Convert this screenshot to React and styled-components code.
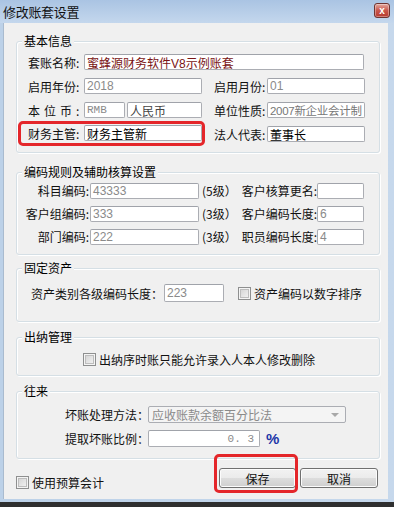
import styled, { createGlobalStyle } from "styled-components";

const GlobalStyle = createGlobalStyle`
  html, body {
    margin: 0;
    padding: 0;
    background: #303030;
  }
  body {
    font-family: "Noto Sans CJK SC", "Liberation Sans", sans-serif;
    font-size: 12px;
    color: #000;
  }
`;

function App() {
  return (
    <>
      <GlobalStyle />
      <Window>
        <TitleBar>
          <Title>修改账套设置</Title>
          <CloseButton>x</CloseButton>
        </TitleBar>
        <Client>
          <Group $mt={18} $h={112} $pt={8} $pl={1}>
            <Legend>基本信息</Legend>
            <Row $h={24}>
              <Cell $w={351}>
                <Label $w={56}>套账名称:</Label>
                <Field $grow $color="#7a1414" $cjk>蜜蜂源财务软件V8示例账套</Field>
              </Cell>
            </Row>
            <Row $h={24}>
              <Cell $w={187}>
                <Label $w={56}>启用年份:</Label>
                <Field $w={118}>2018</Field>
              </Cell>
              <SideCell>
                <Label $w={53}>启用月份:</Label>
                <Field $w={98}>01</Field>
              </SideCell>
            </Row>
            <Row $h={24}>
              <Cell $w={187}>
                <Label $w={56}>
                  <Spread>本位币</Spread>:
                </Label>
                <Field $w={41} $mono>RMB</Field>
                <Field $w={75} $ml={2} $cjk $color="#444">人民币</Field>
              </Cell>
              <SideCell>
                <Label $w={53}>单位性质:</Label>
                <Field $w={98} $cjk $small $color="#777">2007新企业会计制</Field>
              </SideCell>
            </Row>
            <Row $h={24}>
              <Cell $w={187} $marked>
                <Label $w={56}>财务主管:</Label>
                <Field $w={118} $cjk $color="#000">财务主管新</Field>
              </Cell>
              <SideCell>
                <Label $w={53}>法人代表:</Label>
                <Field $w={98} $cjk $color="#000">董事长</Field>
              </SideCell>
            </Row>
          </Group>

          <Group $mt={19} $h={83} $pt={6} $pl={6}>
            <Legend>编码规则及辅助核算设置</Legend>
            {[
              ["科目编码:", "43333", "(5级）", "客户核算更名:", ""],
              ["客户组编码:", "333", "(3级）", "客户编码长度:", "6"],
              ["部门编码:", "222", "(3级）", "职员编码长度:", "4"],
            ].map(([a, b, c, d, e]) => (
              <Row $h={23} key={a}>
                <Label $w={66} $right>{a}</Label>
                <Field $w={109} $ml={1}>{b}</Field>
                <Suffix>{c}</Suffix>
                <Label $w={79} $right>{d}</Label>
                <Field $w={47}>{e}</Field>
              </Row>
            ))}
          </Group>

          <Group $mt={13} $h={54} $pt={15} $pl={14}>
            <Legend>固定资产</Legend>
            <Row $h={18}>
              <Label $w={133}>资产类别各级编码长度：</Label>
              <Field $w={60} $h={18}>223</Field>
              <Check $ml={14}>
                <Box />
                资产编码以数字排序
              </Check>
            </Row>
          </Group>

          <Group $mt={15} $h={39} $pt={15} $pl={66}>
            <Legend>出纳管理</Legend>
            <Row $h={13}>
              <Check>
                <Box />
                出纳序时账只能允许录入人本人修改删除
              </Check>
            </Row>
          </Group>

          <Group $mt={15} $h={68} $pt={14} $pl={48}>
            <Legend>往来</Legend>
            <Row $h={17}>
              <Label $w={83}>坏账处理方法：</Label>
              <Select>
                应收账款余额百分比法
                <Arrow />
              </Select>
            </Row>
            <Row $h={17} $mt={7}>
              <Label $w={83}>提取坏账比例：</Label>
              <Field $w={112} $h={17} $right $mono>0. 3</Field>
              <Percent>%</Percent>
            </Row>
          </Group>

          <Footer>
            <Check $mt={7}>
              <Box />
              使用预算会计
            </Check>
            <Buttons>
              <Button $w={77} $marked>保存</Button>
              <Button $w={78}>取消</Button>
            </Buttons>
          </Footer>
        </Client>
        <BottomEdge />
      </Window>
    </>
  );
}

export default App;

const Window = styled.div`
  width: 394px;
  height: 507px;
  display: flex;
  flex-direction: column;
  background: linear-gradient(90deg, #bcd1e8, #c6d8ec);
  overflow: hidden;
`;

const TitleBar = styled.div`
  height: 23px;
  flex: none;
  display: flex;
  align-items: center;
  justify-content: space-between;
  padding: 0 4px 0 3px;
  background: linear-gradient(#aac4e3, #c4d7ed);
  box-sizing: border-box;
`;

const Title = styled.div`
  font-size: 13px;
  color: #111;
  letter-spacing: -0.3px;
`;

const CloseButton = styled.div`
  width: 16px;
  height: 15px;
  box-sizing: border-box;
  margin-top: -2px;
  border: 1px solid #6f3431;
  border-radius: 3px;
  background: linear-gradient(#e3a99f, #c9564b 50%, #b6392f);
  box-shadow: inset 0 0 0 1px rgba(255, 255, 255, 0.35);
  color: #fff;
  font: bold 10px "Liberation Sans", sans-serif;
  display: flex;
  align-items: center;
  justify-content: center;
  line-height: 1;
`;

const Client = styled.div`
  flex: none;
  height: 476px;
  margin: 0 6px 0 3px;
  padding: 0 10px 0 12px;
  box-sizing: border-box;
  background: #f0f0f0;
  border-left: 1px solid #a9bbcf;
  display: flex;
  flex-direction: column;
`;

const BottomEdge = styled.div`
  margin-top: 3px;
  flex: 1;
  background: #2f2f2f;
`;

const Group = styled.div`
  position: relative;
  width: 364px;
  height: ${(p) => p.$h}px;
  margin-top: ${(p) => p.$mt}px;
  padding: ${(p) => p.$pt}px 0 0 ${(p) => p.$pl}px;
  box-sizing: border-box;
  border: 1px solid #d5dfe5;
  border-radius: 3px;
  box-shadow: inset 1px 1px 0 #fff, 1px 1px 0 #fff;
  flex: none;
`;

const Legend = styled.span`
  position: absolute;
  top: -9px;
  left: 5px;
  padding: 0 2px;
  line-height: 16px;
  background: #f0f0f0;
  font-size: 12px;
`;

const Row = styled.div`
  display: flex;
  align-items: center;
  height: ${(p) => p.$h}px;
  margin-top: ${(p) => p.$mt || 0}px;
`;

const Cell = styled.div`
  position: relative;
  display: flex;
  align-items: center;
  width: ${(p) => p.$w}px;
  height: 24px;
  box-sizing: border-box;
  padding: 0 2px 0 7px;
  border: 3px solid ${(p) => (p.$marked ? "#e4262a" : "transparent")};
  border-radius: 5px;
  ${(p) => (p.$marked ? "margin-top: -2px; height: 25px;" : "")}
`;

const SideCell = styled.div`
  display: flex;
  align-items: center;
  margin-left: 9px;
`;

const Label = styled.span`
  width: ${(p) => p.$w}px;
  flex: none;
  white-space: nowrap;
  text-align: ${(p) => (p.$right ? "right" : "left")};
  color: #111;
`;

const Spread = styled.span`
  letter-spacing: 4px;
`;

const Field = styled.div`
  width: ${(p) => (p.$grow ? "auto" : `${p.$w}px`)};
  flex: ${(p) => (p.$grow ? 1 : "none")};
  height: ${(p) => p.$h || 16}px;
  margin-left: ${(p) => p.$ml || 0}px;
  box-sizing: border-box;
  border: 1px solid #abadb3;
  border-top-color: #a0a3aa;
  border-radius: 2px;
  background: #fff;
  padding: 0 ${(p) => (p.$right ? 5 : 1)}px 0 2px;
  display: flex;
  align-items: center;
  justify-content: ${(p) => (p.$right ? "flex-end" : "flex-start")};
  white-space: nowrap;
  overflow: hidden;
  color: ${(p) => p.$color || "#8a8a8a"};
  font-family: ${(p) =>
    p.$cjk
      ? '"Liberation Sans", "Noto Sans CJK SC", sans-serif'
      : p.$mono
      ? '"Liberation Mono", monospace'
      : '"Liberation Sans", sans-serif'};
  font-size: ${(p) => (p.$mono ? 11 : p.$small ? 11.5 : 12)}px;
  letter-spacing: ${(p) => (p.$small ? "-0.3px" : "0")};
`;

const Suffix = styled.span`
  width: 36px;
  flex: none;
  margin-left: 3px;
  white-space: nowrap;
  color: #111;
`;

const Check = styled.label`
  display: flex;
  align-items: center;
  gap: 3px;
  margin-left: ${(p) => p.$ml || 0}px;
  margin-top: ${(p) => p.$mt || 0}px;
  height: 14px;
  white-space: nowrap;
  color: #111;
`;

const Box = styled.span`
  width: 13px;
  height: 13px;
  flex: none;
  box-sizing: border-box;
  border: 1px solid #8e8f8f;
  background: linear-gradient(135deg, #cfcfcf, #f7f7f7);
  box-shadow: inset 0 0 0 1px #f4f4f4, inset 0 0 0 2px #bdbdbd;
`;

const Select = styled.div`
  position: relative;
  width: 198px;
  height: 17px;
  box-sizing: border-box;
  border: 1px solid #abadb3;
  border-radius: 2px;
  background: #f4f4f4;
  padding-left: 3px;
  display: flex;
  align-items: center;
  color: #8a8a8a;
`;

const Arrow = styled.span`
  position: absolute;
  right: 6px;
  top: 6px;
  border-left: 4px solid transparent;
  border-right: 4px solid transparent;
  border-top: 4px solid #a8a8a8;
`;

const Percent = styled.span`
  margin-left: 6px;
  color: #1d36a8;
  font: bold 15px "Liberation Sans", sans-serif;
`;

const Footer = styled.div`
  display: flex;
  align-items: flex-start;
  justify-content: space-between;
  padding-top: 9px;
  height: 20px;
`;

const Buttons = styled.div`
  display: flex;
  gap: 4px;
`;

const Button = styled.div`
  position: relative;
  width: ${(p) => p.$w}px;
  height: 20px;
  box-sizing: border-box;
  border: 1px solid #707070;
  border-radius: 3px;
  background: linear-gradient(#f2f2f2, #ebebeb 50%, #dddddd 51%, #cfcfcf);
  box-shadow: inset 0 0 0 1px #fcfcfc;
  display: flex;
  align-items: center;
  justify-content: center;
  color: #111;
  &::after {
    content: "";
    display: ${(p) => (p.$marked ? "block" : "none")};
    position: absolute;
    top: -15px;
    left: -6px;
    right: -3px;
    bottom: -6px;
    border: 3px solid #e4262a;
    border-radius: 5px;
  }
`;
